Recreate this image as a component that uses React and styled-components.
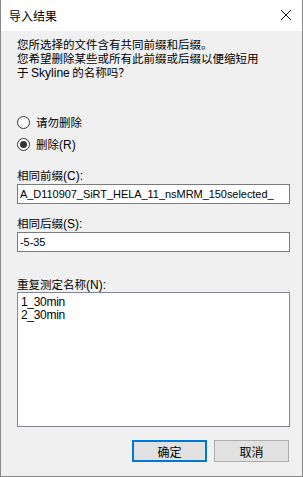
import React, { useState } from "react";
import styled, { createGlobalStyle } from "styled-components";

const GlobalStyle = createGlobalStyle`
  html, body {
    margin: 0;
    padding: 0;
    background: #f0f0f0;
  }
  * {
    box-sizing: border-box;
  }
`;

const Window = styled.div`
  width: 303px;
  height: 477px;
  display: flex;
  flex-direction: column;
  background: #f0f0f0;
  border: 1px solid #888888;
  border-top: none;
  font-family: "Liberation Sans", "Noto Sans CJK SC", sans-serif;
  font-size: 12px;
  color: #000;
`;

const TitleBar = styled.div`
  height: 31px;
  flex: none;
  display: flex;
  align-items: center;
  justify-content: space-between;
  background: #ffffff;
  padding: 0 9px 1px 8px;
  font-family: "Noto Sans CJK SC", sans-serif;
  font-size: 12px;
`;

const CloseBox = styled.div`
  width: 12px;
  height: 12px;
  display: flex;
  margin-right: 1px;
`;

const Body = styled.div`
  flex: 1;
  display: flex;
  flex-direction: column;
  padding: 6px 12px 0 16px;
`;

const Message = styled.div`
  line-height: 14px;
  font-family: "Noto Sans CJK SC", sans-serif;
  font-size: 11.5px;
`;

const Latin = styled.span`
  font-family: "Liberation Sans", sans-serif;
  font-size: 12px;
`;

const RadioGroup = styled.div`
  display: flex;
  flex-direction: column;
  gap: 6px;
  margin-top: 34px;
`;

const RadioRow = styled.label`
  display: flex;
  align-items: center;
  height: 16px;
  gap: 6px;
  font-family: "Noto Sans CJK SC", sans-serif;
  font-size: 11.5px;
  cursor: default;
`;

const RadioCircle = styled.span`
  width: 13px;
  height: 13px;
  border-radius: 50%;
  border: 1px solid #333333;
  background: #ffffff;
  display: flex;
  align-items: center;
  justify-content: center;
  &::after {
    content: "";
    width: 7px;
    height: 7px;
    border-radius: 50%;
    background: ${(p) => (p.$checked ? "#333333" : "transparent")};
  }
`;

const FieldLabel = styled.div`
  height: 14px;
  line-height: 14px;
  margin-top: ${(p) => p.$top}px;
  font-family: "Noto Sans CJK SC", sans-serif;
  font-size: 11.5px;
`;

const TextBox = styled.div`
  height: 20px;
  margin-top: 2px;
  border: 1px solid #7a7a7a;
  background: #ffffff;
  padding: 0 2px;
  display: flex;
  align-items: center;
  white-space: nowrap;
  overflow: hidden;
  font-size: 11px;
  letter-spacing: -0.05px;
`;

const ListBox = styled.div`
  height: 135px;
  margin-top: 1px;
  border: 1px solid #828790;
  background: #ffffff;
  padding: 3px 3px;
  display: flex;
  flex-direction: column;
`;

const ListItem = styled.div`
  height: 13px;
  line-height: 13px;
  letter-spacing: -0.3px;
`;

const ButtonRow = styled.div`
  display: flex;
  justify-content: flex-end;
  gap: 7px;
  margin-top: 13px;
  padding-right: 1px;
`;

const Button = styled.button`
  width: 75px;
  height: 22px;
  padding: 0;
  background: #e1e1e1;
  border: ${(p) => (p.$primary ? "2px solid #0078d7" : "1px solid #adadad")};
  font-family: "Noto Sans CJK SC", sans-serif;
  font-size: 12px;
  color: #000;
`;

const App = () => {
  const [choice, setChoice] = useState("remove");

  return (
    <>
      <GlobalStyle />
      <Window>
        <TitleBar>
          <span>导入结果</span>
          <CloseBox>
            <svg width="12" height="12" viewBox="0 0 12 12">
              <path d="M1 1 L11 11 M11 1 L1 11" stroke="#111" strokeWidth="1" />
            </svg>
          </CloseBox>
        </TitleBar>
        <Body>
          <Message>
            您所选择的文件含有共同前缀和后缀。
            <br />
            您希望删除某些或所有此前缀或后缀以便缩短用
            <br />于 <Latin>Skyline</Latin> 的名称吗？
          </Message>
          <RadioGroup>
            <RadioRow onClick={() => setChoice("keep")}>
              <RadioCircle $checked={choice === "keep"} />
              <span>请勿删除</span>
            </RadioRow>
            <RadioRow onClick={() => setChoice("remove")}>
              <RadioCircle $checked={choice === "remove"} />
              <span>
                删除<Latin>(R)</Latin>
              </span>
            </RadioRow>
          </RadioGroup>
          <FieldLabel $top={16}>
            相同前缀<Latin>(C):</Latin>
          </FieldLabel>
          <TextBox>A_D110907_SiRT_HELA_11_nsMRM_150selected_</TextBox>
          <FieldLabel $top={12}>
            相同后缀<Latin>(S):</Latin>
          </FieldLabel>
          <TextBox>-5-35</TextBox>
          <FieldLabel $top={25}>
            重复测定名称<Latin>(N):</Latin>
          </FieldLabel>
          <ListBox>
            <ListItem>1_30min</ListItem>
            <ListItem>2_30min</ListItem>
          </ListBox>
          <ButtonRow>
            <Button $primary>确定</Button>
            <Button>取消</Button>
          </ButtonRow>
        </Body>
      </Window>
    </>
  );
};

export default App;
